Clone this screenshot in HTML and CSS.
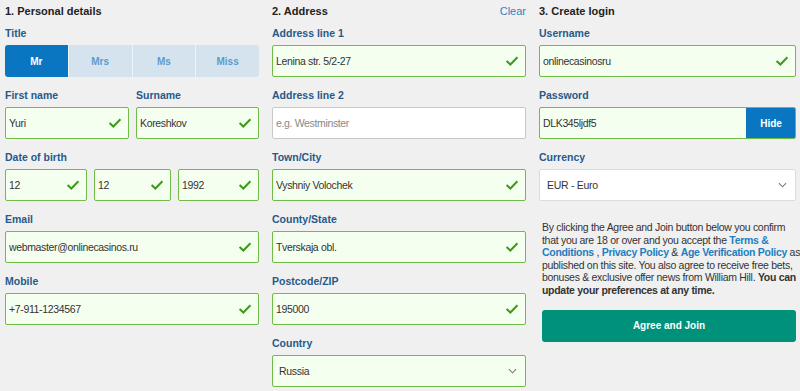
FILE: index.html
```html
<!DOCTYPE html>
<html lang="en">
<head>
    <meta charset="UTF-8">
    <title>Register</title>
    <link rel="stylesheet" href="styles.css">
</head>
<body>
    <div class="form">
        <!-- 1. Personal details -->
        <div class="column">
            <h2>1. Personal details</h2>
            <div class="field">
                <label>Title</label>
                <div class="titles">
                    <button class="active">Mr</button>
                    <button>Mrs</button>
                    <button>Ms</button>
                    <button>Miss</button>
                </div>
            </div>
            <div class="row two">
                <div class="field">
                    <label>First name</label>
                    <div class="box valid"><input type="text" value="Yuri"><svg class="tick" viewBox="0 0 16 12"><polyline points="1.5,6 6,10.2 14.5,1.5"/></svg></div>
                </div>
                <div class="field">
                    <label>Surname</label>
                    <div class="box valid"><input type="text" value="Koreshkov"><svg class="tick" viewBox="0 0 16 12"><polyline points="1.5,6 6,10.2 14.5,1.5"/></svg></div>
                </div>
            </div>
            <div class="field">
                <label>Date of birth</label>
                <div class="row three">
                    <div class="box valid"><input type="text" value="12"><svg class="tick" viewBox="0 0 16 12"><polyline points="1.5,6 6,10.2 14.5,1.5"/></svg></div>
                    <div class="box valid"><input type="text" value="12"><svg class="tick" viewBox="0 0 16 12"><polyline points="1.5,6 6,10.2 14.5,1.5"/></svg></div>
                    <div class="box valid"><input type="text" value="1992"><svg class="tick" viewBox="0 0 16 12"><polyline points="1.5,6 6,10.2 14.5,1.5"/></svg></div>
                </div>
            </div>
            <div class="field">
                <label>Email</label>
                <div class="box valid"><input type="text" value="webmaster@onlinecasinos.ru"><svg class="tick" viewBox="0 0 16 12"><polyline points="1.5,6 6,10.2 14.5,1.5"/></svg></div>
            </div>
            <div class="field">
                <label>Mobile</label>
                <div class="box valid"><input type="text" value="+7-911-1234567"><svg class="tick" viewBox="0 0 16 12"><polyline points="1.5,6 6,10.2 14.5,1.5"/></svg></div>
            </div>
        </div>

        <!-- 2. Address -->
        <div class="column">
            <div class="heading">
                <h2>2. Address</h2>
                <a href="#" class="clear">Clear</a>
            </div>
            <div class="field">
                <label>Address line 1</label>
                <div class="box valid"><input type="text" value="Lenina str. 5/2-27"><svg class="tick" viewBox="0 0 16 12"><polyline points="1.5,6 6,10.2 14.5,1.5"/></svg></div>
            </div>
            <div class="field">
                <label>Address line 2</label>
                <div class="box"><input type="text" placeholder="e.g. Westminster"></div>
            </div>
            <div class="field">
                <label>Town/City</label>
                <div class="box valid"><input type="text" value="Vyshniy Volochek"><svg class="tick" viewBox="0 0 16 12"><polyline points="1.5,6 6,10.2 14.5,1.5"/></svg></div>
            </div>
            <div class="field">
                <label>County/State</label>
                <div class="box valid"><input type="text" value="Tverskaja obl."><svg class="tick" viewBox="0 0 16 12"><polyline points="1.5,6 6,10.2 14.5,1.5"/></svg></div>
            </div>
            <div class="field">
                <label>Postcode/ZIP</label>
                <div class="box valid"><input type="text" value="195000"><svg class="tick" viewBox="0 0 16 12"><polyline points="1.5,6 6,10.2 14.5,1.5"/></svg></div>
            </div>
            <div class="field">
                <label>Country</label>
                <div class="box valid select"><span>Russia</span><svg class="chevron" viewBox="0 0 10 6"><polyline points="1,1 5,5 9,1"/></svg></div>
            </div>
        </div>

        <!-- 3. Create login -->
        <div class="column">
            <h2>3. Create login</h2>
            <div class="field">
                <label>Username</label>
                <div class="box valid"><input type="text" value="onlinecasinosru"><svg class="tick" viewBox="0 0 16 12"><polyline points="1.5,6 6,10.2 14.5,1.5"/></svg></div>
            </div>
            <div class="field">
                <label>Password</label>
                <div class="box valid password"><input type="text" value="DLK345ljdf5"><button class="hide">Hide</button></div>
            </div>
            <div class="field">
                <label>Currency</label>
                <div class="box select plain"><span>EUR - Euro</span><svg class="chevron" viewBox="0 0 10 6"><polyline points="1,1 5,5 9,1"/></svg></div>
            </div>
            <p class="terms">By clicking the Agree and Join button below you confirm<br>
                that you are 18 or over and you accept the <a href="#">Terms &amp;<br>
                Conditions</a> , <a href="#">Privacy Policy</a> &amp; <a href="#">Age Verification Policy</a> as<br>
                published on this site. You also agree to receive free bets,<br>
                bonuses &amp; exclusive offer news from William Hill. <b>You can<br>
                update your preferences at any time.</b></p>
            <button class="join">Agree and Join</button>
        </div>
    </div>
</body>
</html>
```

FILE: styles.css
```css
body {
    margin: 0;
    background-color: #f0f0f0;
    font-family: "Liberation Sans", Arial, sans-serif;
    font-size: 11px;
    color: #333;
}

.form {
    display: grid;
    grid-template-columns: 254px 254px 257px;
    column-gap: 13px;
    padding: 0 4px 0 5px;
}

h2 {
    margin: 0;
    padding-top: 3px;
    font-size: 11px;
    line-height: 16px;
    font-weight: bold;
    color: #222;
}

.heading {
    display: flex;
    justify-content: space-between;
    align-items: flex-end;
}

.clear {
    color: #2a86c5;
    text-decoration: none;
    font-size: 11px;
    line-height: 16px;
}

.column > h2,
.heading {
    margin-bottom: 8px;
}

.field {
    margin-bottom: 12px;
}

.row .field {
    margin-bottom: 0;
}

.row.two {
    display: grid;
    grid-template-columns: 124px 123px;
    column-gap: 7px;
    margin-bottom: 12px;
}

.row.three {
    display: grid;
    grid-template-columns: 82px 77px 81px;
    column-gap: 7px;
}

label {
    display: block;
    font-weight: bold;
    font-size: 10.5px;
    color: #265a8a;
    line-height: 12px;
    margin-bottom: 6px;
}

.titles {
    display: flex;
    height: 32px;
    border-radius: 3px;
    overflow: hidden;
    gap: 1px;
    background-color: #eef3f7;
}

.titles button {
    flex: 1;
    border: none;
    background-color: #d5e3ee;
    color: #5c9ccf;
    font-family: inherit;
    font-size: 10px;
    font-weight: bold;
}

.titles button.active {
    background-color: #0a76c2;
    color: white;
}

.box {
    display: flex;
    align-items: center;
    height: 32px;
    box-sizing: border-box;
    border: 1px solid #c8c8c8;
    border-radius: 2px;
    background-color: white;
}

.box.valid {
    border-color: #6fbd47;
    background-color: #f5fff0;
}

.box input {
    flex: 1;
    min-width: 0;
    height: 100%;
    border: none;
    background: transparent;
    padding: 0 0 0 3px;
    font-family: inherit;
    font-size: 10.5px;
    letter-spacing: -0.35px;
    color: #333;
    outline: none;
}

.box input::placeholder {
    color: #888;
}

.tick {
    width: 14px;
    height: 10px;
    margin-right: 6px;
    flex-shrink: 0;
}

.tick polyline {
    fill: none;
    stroke: #3c9a17;
    stroke-width: 2.4;
}

.select {
    justify-content: space-between;
    padding: 0 8px 0 6px;
    font-size: 10.5px;
    letter-spacing: -0.3px;
}

.select.plain {
    border-color: #dcdcdc;
    padding-left: 7px;
}

.chevron {
    width: 9px;
    height: 6px;
}

.chevron polyline {
    fill: none;
    stroke: #777;
    stroke-width: 1.2;
}

.password {
    overflow: hidden;
}

.hide {
    width: 50px;
    height: 32px;
    margin: -1px -1px -1px 0;
    border: none;
    background-color: #0a76c2;
    color: white;
    font-family: inherit;
    font-size: 10px;
    font-weight: bold;
}

.terms {
    margin: 20px -3px 0 3px;
    font-size: 10.5px;
    line-height: 12.6px;
    letter-spacing: -0.3px;
    white-space: nowrap;
    color: #333;
}

.terms a {
    color: #1e7fc0;
    font-weight: bold;
    text-decoration: none;
}

.join {
    display: block;
    width: 254px;
    height: 32px;
    margin: 13px 0 0 3px;
    border: none;
    border-radius: 3px;
    background-color: #00917a;
    color: white;
    font-family: inherit;
    font-size: 10px;
    font-weight: bold;
}
```
